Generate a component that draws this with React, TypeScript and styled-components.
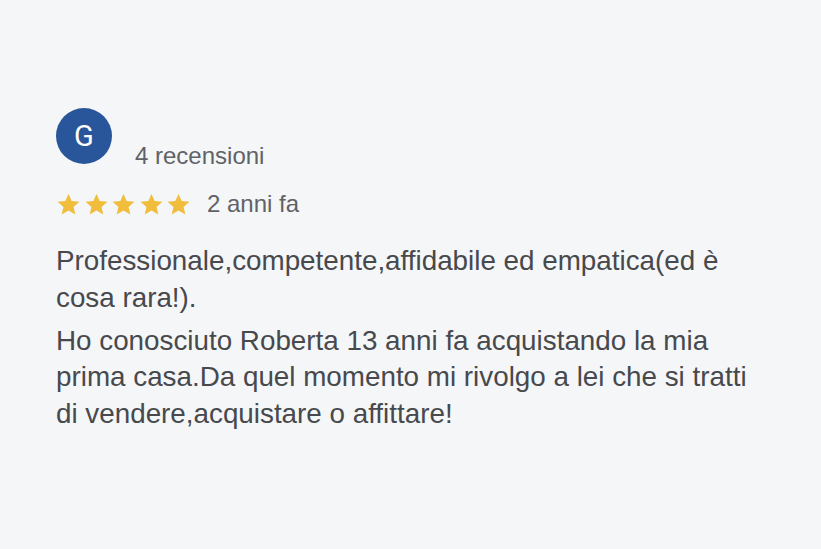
import React from "react";
import styled, { createGlobalStyle } from "styled-components";

const Global = createGlobalStyle`
  html, body { margin: 0; padding: 0; }
  body {
    background: #f5f6f8;
    font-family: "Liberation Sans", Arial, Helvetica, sans-serif;
    -webkit-font-smoothing: antialiased;
  }
`;

const Page = styled.div`
  width: 821px;
  height: 549px;
  box-sizing: border-box;
  background: #f5f6f8;
  padding: 108px 0 0 56px;
  overflow: hidden;
`;

const Review = styled.article`
  display: flex;
  flex-direction: column;
  width: 702px;
`;

const Header = styled.div`
  display: flex;
  align-items: flex-start;
`;

const Avatar = styled.div`
  width: 56px;
  height: 56px;
  border-radius: 50%;
  background: #29559a;
  color: #fff;
  display: flex;
  align-items: center;
  justify-content: center;
  font-family: Roboto, "Liberation Sans", sans-serif;
  font-size: 29px;
  font-weight: 400;
  flex-shrink: 0;
`;

const Meta = styled.div`
  margin: 34px 0 0 23px;
  font-size: 24px;
  color: #5f6267;
  line-height: 28px;
`;

const RatingRow = styled.div`
  display: flex;
  align-items: center;
  margin-top: 20px;
  gap: 16px;
`;

const Stars = styled.div`
  display: flex;
  gap: 2.5px;
`;

const When = styled.span`
  font-size: 24px;
  line-height: 28px;
  color: #5f6267;
`;

const Body = styled.div`
  margin-top: 25px;
  font-size: 27.8px;
  line-height: 36.8px;
  color: #47494d;
`;

const Para = styled.p`
  margin: 0 0 6px 0;
`;

const Star = () => (
  <svg width="25" height="25" viewBox="0 0 24 24">
    <path
      d="M12 1.8l3.05 6.9 7.45.7-5.65 4.95 1.7 7.35L12 17.850 5.45 21.7l1.7-7.35L1.5 9.4l7.45-.7z"
      fill="#f1bd3d"
    />
  </svg>
);

export default function App() {
  return (
    <>
      <Global />
      <Page>
        <Review>
          <Header>
            <Avatar>G</Avatar>
            <Meta>4 recensioni</Meta>
          </Header>
          <RatingRow>
            <Stars>
              {[0, 1, 2, 3, 4].map((i) => (
                <Star key={i} />
              ))}
            </Stars>
            <When>2 anni fa</When>
          </RatingRow>
          <Body>
            <Para>Professionale,competente,affidabile ed empatica(ed è cosa rara!).</Para>
            <Para>
              Ho conosciuto Roberta 13 anni fa acquistando la mia prima casa.Da quel momento mi rivolgo a lei che si tratti di vendere,acquistare o affittare!
            </Para>
          </Body>
        </Review>
      </Page>
    </>
  );
}
